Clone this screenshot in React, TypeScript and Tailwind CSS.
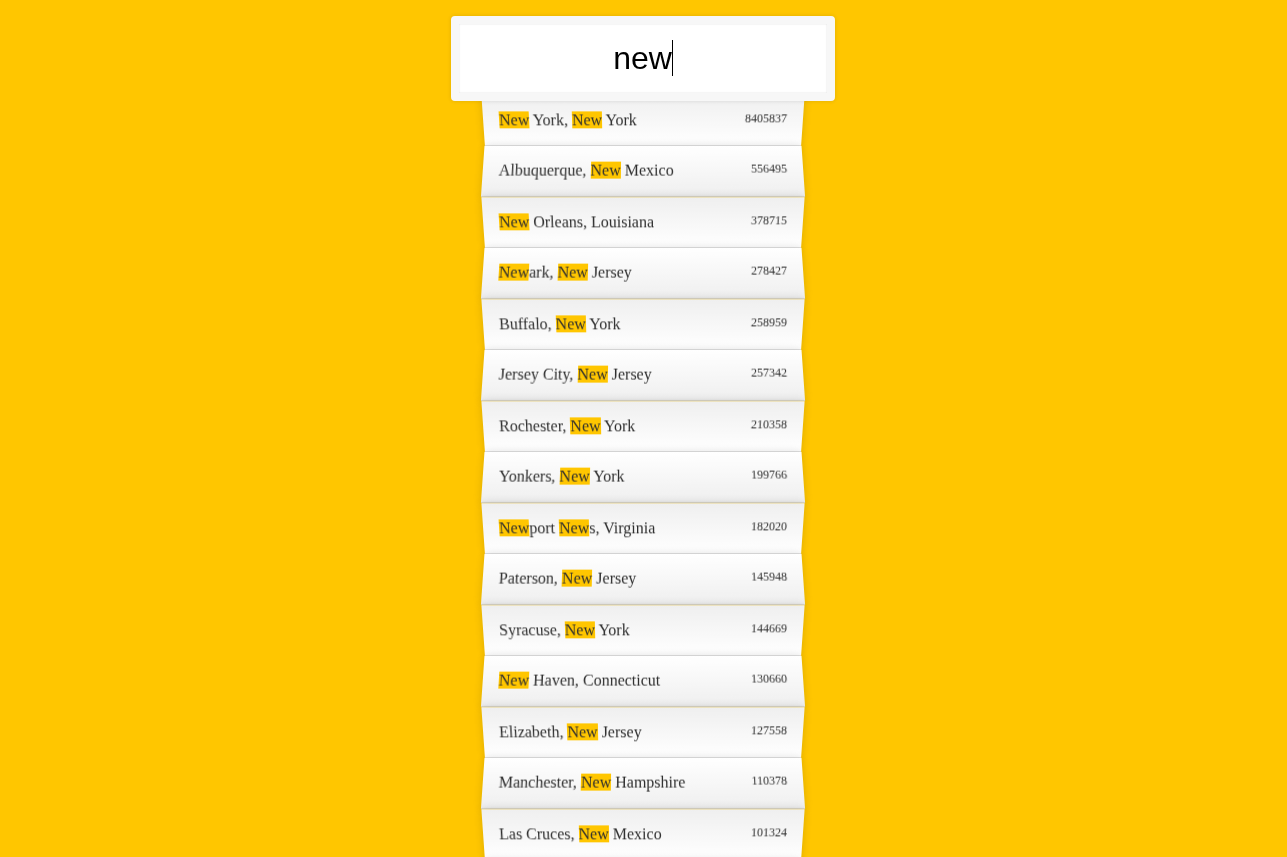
import React from "react";

const cities: [string, string][] = [
  ["New York, New York", "8405837"],
  ["Albuquerque, New Mexico", "556495"],
  ["New Orleans, Louisiana", "378715"],
  ["Newark, New Jersey", "278427"],
  ["Buffalo, New York", "258959"],
  ["Jersey City, New Jersey", "257342"],
  ["Rochester, New York", "210358"],
  ["Yonkers, New York", "199766"],
  ["Newport News, Virginia", "182020"],
  ["Paterson, New Jersey", "145948"],
  ["Syracuse, New York", "144669"],
  ["New Haven, Connecticut", "130660"],
  ["Elizabeth, New Jersey", "127558"],
  ["Manchester, New Hampshire", "110378"],
  ["Las Cruces, New Mexico", "101324"],
  ["New Britain, Connecticut", "98596"],
];

function Highlight({ text }: { text: string }) {
  const parts = text.split(/(new)/i);
  return (
    <>
      {parts.map((p, i) =>
        /^new$/i.test(p) ? (
          <span key={i} className="bg-[#ffc600]">
            {p}
          </span>
        ) : (
          <React.Fragment key={i}>{p}</React.Fragment>
        )
      )}
    </>
  );
}

export default function App() {
  return (
    <div className="min-h-screen bg-[#ffc600] overflow-hidden">
      <div className="w-[322px] mx-auto pr-[2px] pt-2">
        <div
          className="relative top-2 -left-[32px] w-[384px] z-[2] bg-white border-8 border-[#f7f7f7] rounded-[4px] p-4 text-center text-[32px] leading-[37px] text-black shadow-[0_0_4px_rgba(0,0,0,0.12),inset_0_0_1.6px_rgba(0,0,0,0.19)]"
          style={{ fontFamily: '"Liberation Sans", Arial, sans-serif' }}
        >
          <span className="relative">
            new
            <span className="absolute -right-px top-0 h-full w-px bg-black" />
          </span>
        </div>
        <ul
          className="relative m-0 p-0"
          style={{ fontFamily: '"Liberation Serif", "Times New Roman", serif' }}
        >
          {cities.map(([name, pop], i) => (
            <li
              key={name}
              className={
                i % 2 === 0
                  ? "list-none flex justify-between p-4 border-b border-[#d8d8d8] shadow-[0_0_8px_rgba(0,0,0,0.14)] text-[#2e2e2e] bg-[linear-gradient(to_top,#ffffff_0%,#efefef_100%)] [transform:perspective(120px)_rotateX(-3deg)_translateY(2.4px)]"
                  : "list-none flex justify-between p-4 border-b border-[#d8d8d8] shadow-[0_0_8px_rgba(0,0,0,0.14)] text-[#2e2e2e] bg-[linear-gradient(to_bottom,#ffffff_0%,#efefef_100%)] [transform:perspective(120px)_rotateX(3deg)_translateY(1.6px)_scale(1.001)]"
              }
            >
              <span className="text-[16px] leading-[18px]">
                <Highlight text={name} />
              </span>
              <span className="text-[12px] leading-[normal]">{pop}</span>
            </li>
          ))}
        </ul>
      </div>
    </div>
  );
}
